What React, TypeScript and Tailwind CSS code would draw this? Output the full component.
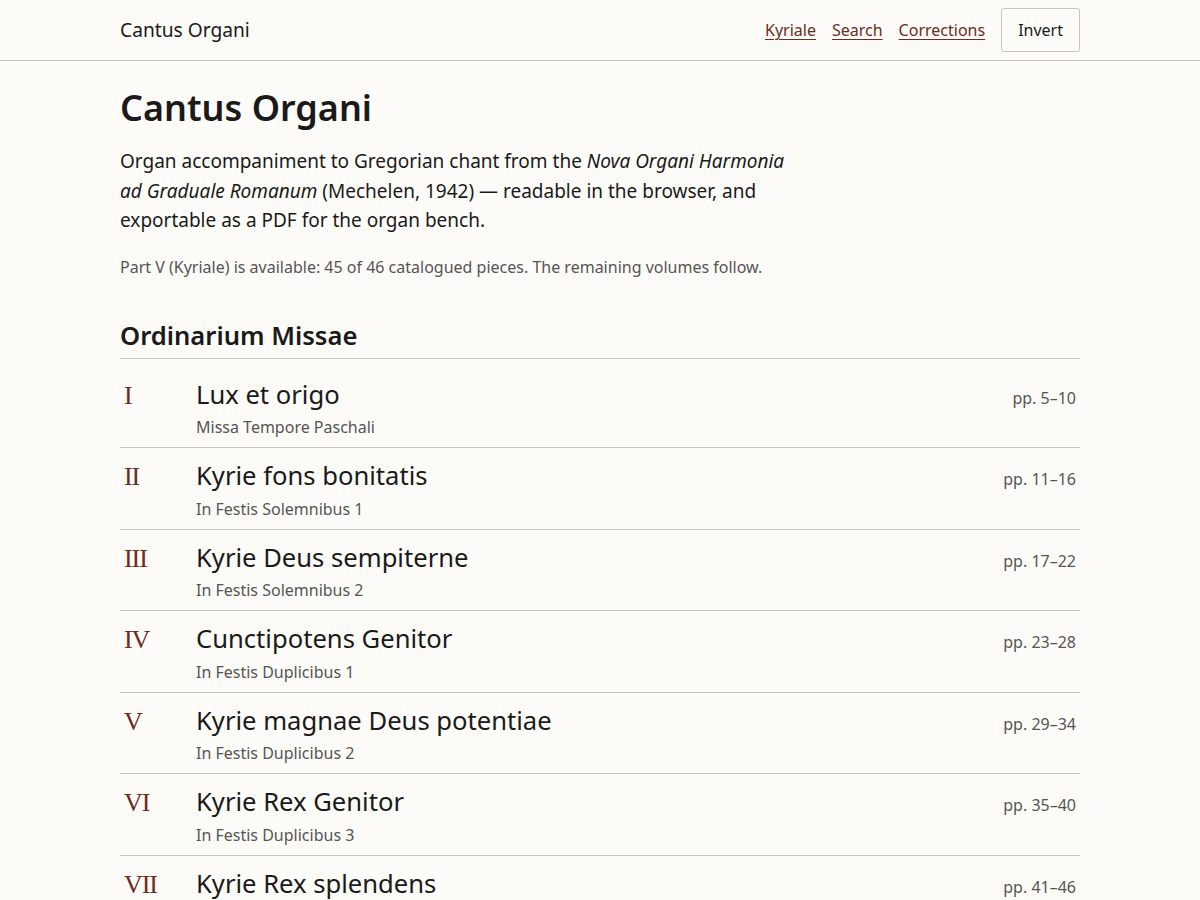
import React from 'react';

type Mass = {
  num: string;
  title: string;
  subtitle: string;
  pages: string;
};

const MASSES: Mass[] = [
  { num: 'I', title: 'Lux et origo', subtitle: 'Missa Tempore Paschali', pages: 'pp. 5–10' },
  { num: 'II', title: 'Kyrie fons bonitatis', subtitle: 'In Festis Solemnibus 1', pages: 'pp. 11–16' },
  { num: 'III', title: 'Kyrie Deus sempiterne', subtitle: 'In Festis Solemnibus 2', pages: 'pp. 17–22' },
  { num: 'IV', title: 'Cunctipotens Genitor', subtitle: 'In Festis Duplicibus 1', pages: 'pp. 23–28' },
  { num: 'V', title: 'Kyrie magnae Deus potentiae', subtitle: 'In Festis Duplicibus 2', pages: 'pp. 29–34' },
  { num: 'VI', title: 'Kyrie Rex Genitor', subtitle: 'In Festis Duplicibus 3', pages: 'pp. 35–40' },
  { num: 'VII', title: 'Kyrie Rex splendens', subtitle: 'In Festis Duplicibus 4', pages: 'pp. 41–46' },
  { num: 'VIII', title: 'De Angelis', subtitle: 'In Festis Duplicibus 5', pages: 'pp. 47–52' },
];

const NavLink: React.FC<{ label: string }> = ({ label }) => (
  <a href="#" className="text-[#6b2c22] underline underline-offset-[3px] decoration-1 hover:text-black">
    {label}
  </a>
);

const MassRow: React.FC<{ mass: Mass }> = ({ mass }) => (
  <li className="flex items-baseline border-b border-[#c9c5bf] px-1 pt-3 pb-2">
    <span className="w-[72px] shrink-0 text-[26px] leading-[32.5px] tracking-[-0.04em] text-[#6b2c22] font-['Liberation_Serif',serif]">
      {mass.num}
    </span>
    <div className="flex-1">
      <a href="#" className="block text-[25.6px] leading-[32.5px] text-[#1a1a1a]">{mass.title}</a>
      <p className="mt-1 text-base leading-6 text-[#555]">{mass.subtitle}</p>
    </div>
    <span className="text-base text-[#555]">{mass.pages}</span>
  </li>
);

export default function App() {
  return (
    <div className="min-h-screen bg-[#fdfbf8] text-[#1a1a1a] font-['Noto_Sans',sans-serif]">
      <header className="border-b border-[#c9c5bf]">
        <div className="mx-auto flex h-[60px] w-[960px] items-center justify-between">
          <span className="text-[19.2px]">Cantus Organi</span>
          <nav className="flex items-center gap-4 text-base">
            <NavLink label="Kyriale" />
            <NavLink label="Search" />
            <NavLink label="Corrections" />
            <button className="h-11 rounded-[3px] border border-[#c9c5bf] bg-[#fdfbf8] px-4 text-base text-[#1a1a1a]">
              Invert
            </button>
          </nav>
        </div>
      </header>

      <main className="mx-auto w-[960px] pt-6">
        <h1 className="text-4xl leading-[1.25] font-semibold">Cantus Organi</h1>
        <p className="mt-[17px] max-w-[680px] text-[19px] leading-[29.5px]">
          Organ accompaniment to Gregorian chant from the <em>Nova Organi Harmonia ad Graduale Romanum</em>{' '}
          (Mechelen, 1942) — readable in the browser, and exportable as a PDF for the organ bench.
        </p>
        <p className="mt-[19px] text-base leading-6 text-[#555]">
          Part V (Kyriale) is available: 45 of 46 catalogued pieces. The remaining volumes follow.
        </p>

        <section className="mt-10">
          <h2 className="border-b border-[#c9c5bf] pb-1.5 text-[25.6px] leading-[1.3] font-semibold">Ordinarium Missae</h2>
          <ul className="mt-2">
            {MASSES.map((m) => (
              <MassRow key={m.num} mass={m} />
            ))}
          </ul>
        </section>
      </main>
    </div>
  );
}
